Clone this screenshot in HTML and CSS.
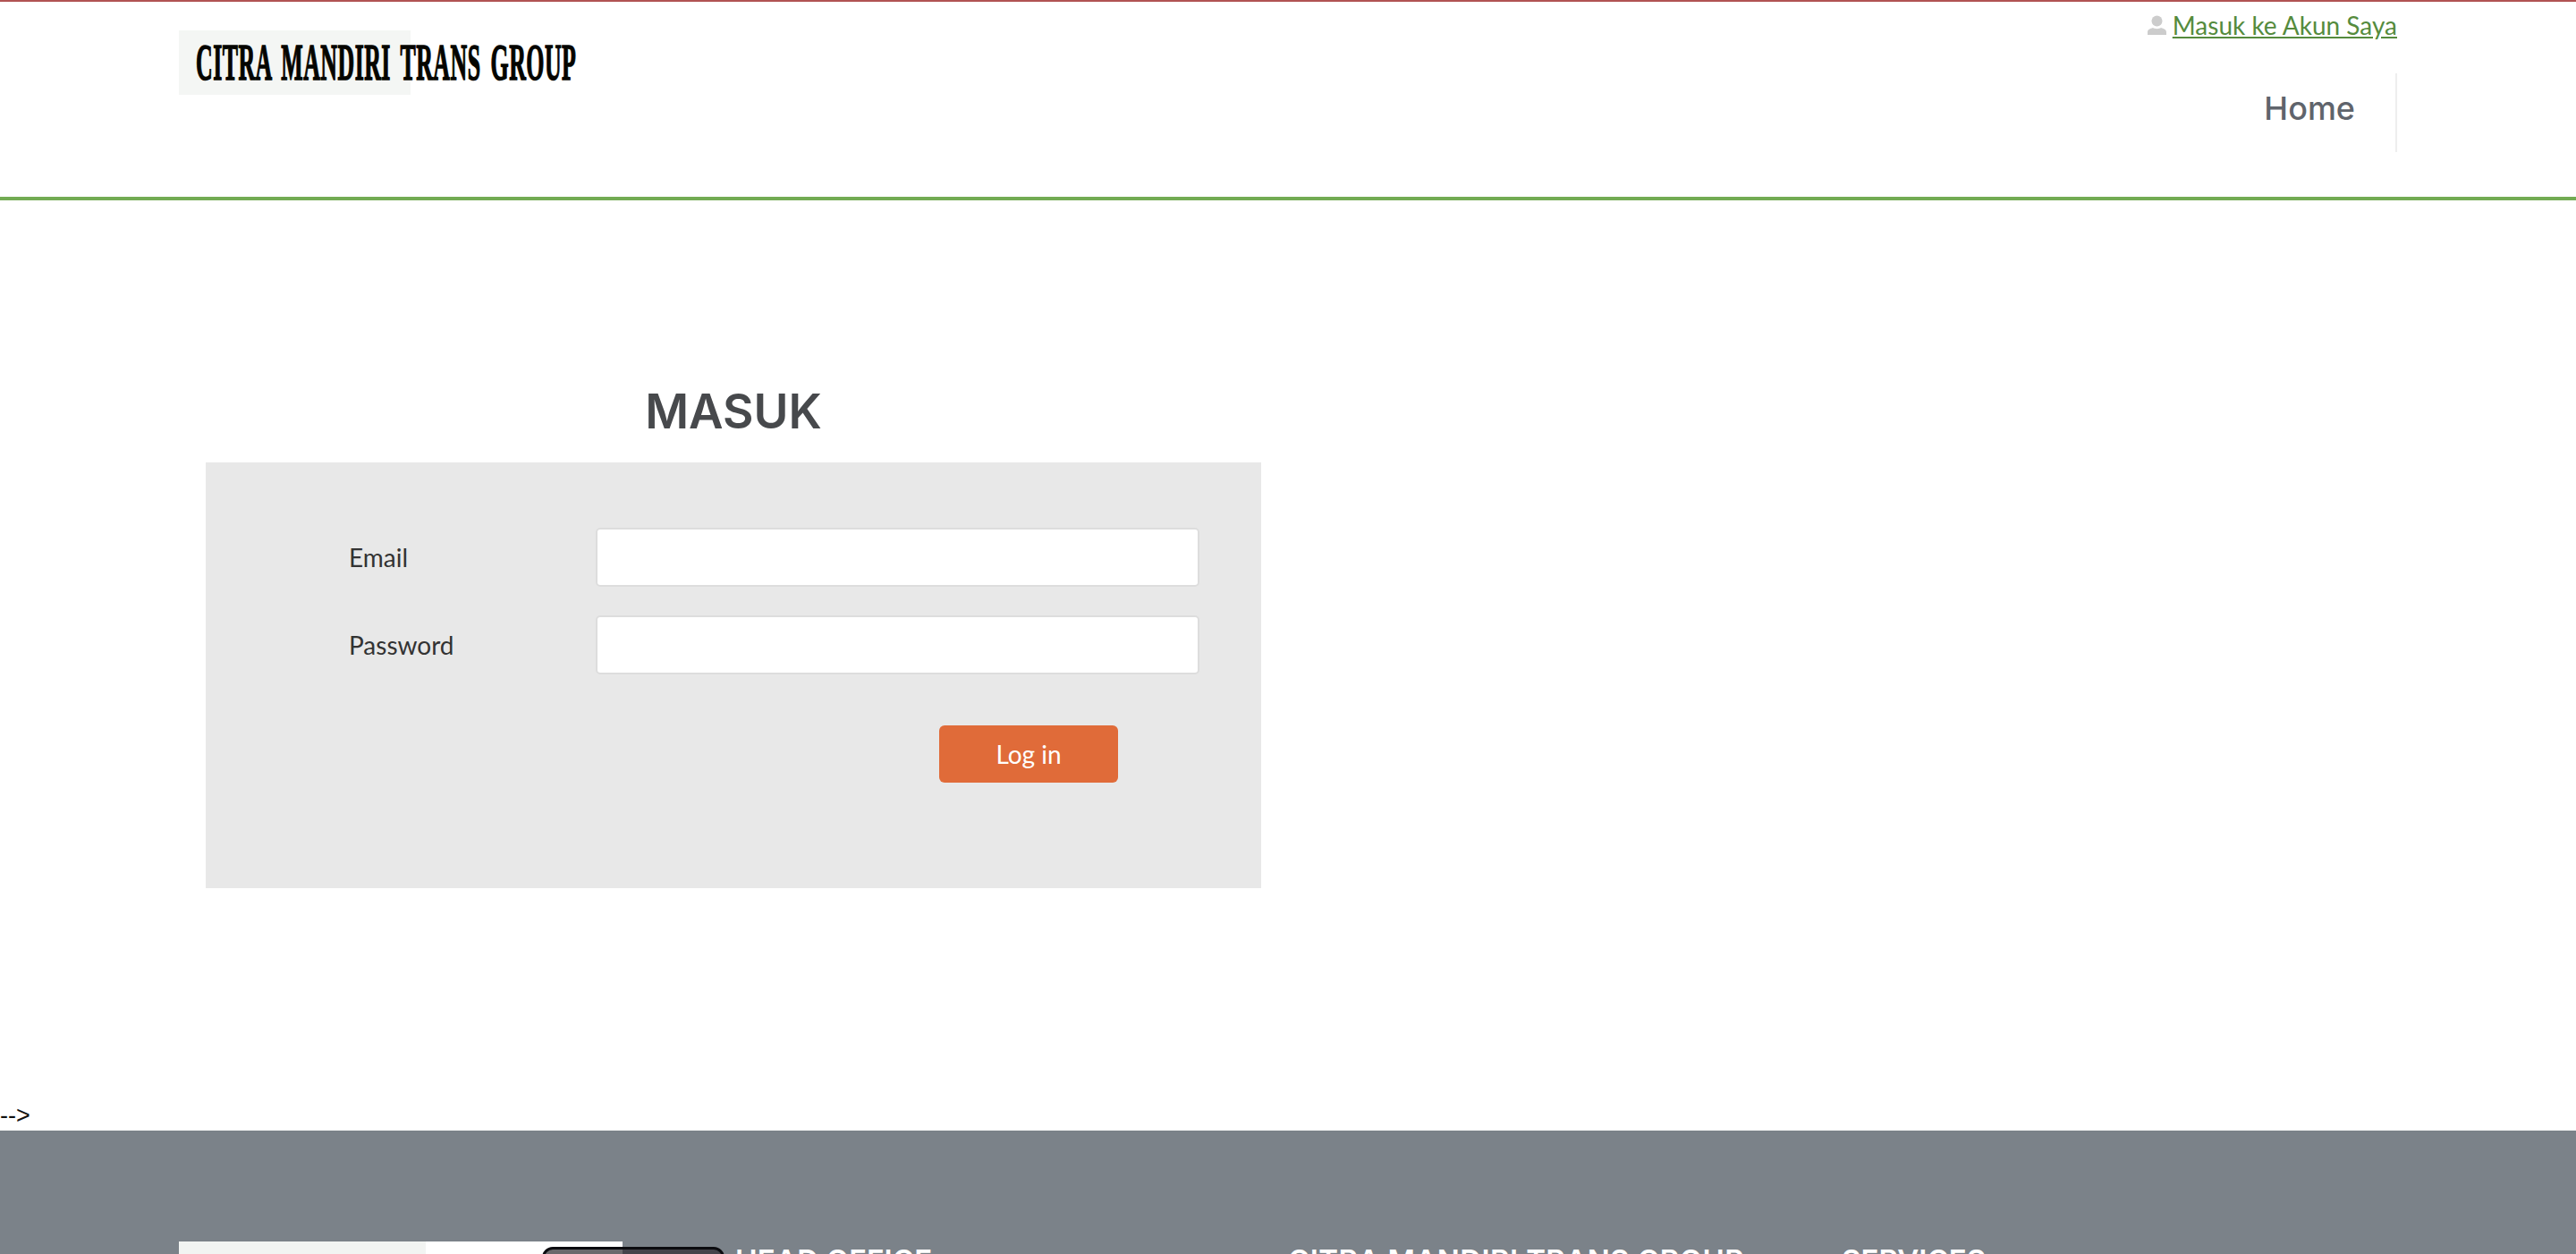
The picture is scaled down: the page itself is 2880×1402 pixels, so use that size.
FILE: index.html
```html
<!DOCTYPE html>
<html lang="id">
<head>
<meta charset="utf-8">
<title>Masuk</title>
<link rel="stylesheet" href="styles.css">
</head>
<body>
<header class="site-header">
  <div class="header-inner">
    <div class="logo"><span class="logo-text">CITRA MANDIRI TRANS GROUP</span></div>
    <div class="header-right">
      <div class="account">
        <svg class="user-icon" viewBox="0 0 21 22" width="21" height="22"><circle cx="10.500" cy="6.500" r="6"/><path d="M0 22v-3c0-3 3-4 6-5 1.500 1.500 7.500 1.500 9 0 3 1 6 2 6 5v3z"/></svg>
        <a class="account-link" href="#">Masuk ke Akun Saya</a>
      </div>
      <nav class="nav"><a class="nav-item" href="#">Home</a></nav>
    </div>
  </div>
</header>
<main class="main">
  <section class="login">
    <h1 class="login-title">MASUK</h1>
    <form class="login-box">
      <div class="field"><label class="field-label">Email</label><input class="field-input" type="text"></div>
      <div class="field"><label class="field-label">Password</label><input class="field-input" type="password"></div>
      <div class="actions"><button class="btn" type="button">Log in</button></div>
    </form>
  </section>
</main>
<div class="stray">--&gt;</div>
<footer class="footer">
  <div class="footer-inner">
    <div class="footer-logo"><span class="badge"></span></div>
    <h3 class="footer-h office">HEAD OFFICE</h3>
    <h3 class="footer-h group">CITRA MANDIRI TRANS GROUP</h3>
    <h3 class="footer-h services">SERVICES</h3>
  </div>
</footer>
</body>
</html>
```
FILE: styles.css
```css
* { box-sizing: border-box; }
html, body { margin: 0; padding: 0; height: 1402px; overflow: hidden; background: #fff; }
body { font-family: "Lato", "Open Sans", sans-serif; color: #333; }

.site-header { height: 224px; border-top: 2px solid #b15353; border-bottom: 4px solid #72ab53; }
.header-inner { display: flex; justify-content: space-between; width: 2480px; margin-left: 200px; }
.logo { margin-top: 32px; width: 259px; height: 72px; background: #f4f6f4; padding: 8px 0 0 19px; }
.logo-text { display: block; white-space: nowrap; font-family: "Liberation Serif", serif; font-weight: 700; font-size: 56px; line-height: 56px; color: #050500; transform: scaleX(.462); transform-origin: 0 0; -webkit-text-stroke: 1.500px #050500; letter-spacing: 1px; word-spacing: 9px; }

.header-right { display: flex; flex-direction: column; align-items: flex-end; }
.account { display: flex; align-items: center; gap: 7px; margin-top: 10px; height: 32px; }
.user-icon { fill: #ccc; }
.account-link { font-family: "Lato", sans-serif; font-size: 28px; color: #558b3d; }
.nav { margin-top: 38px; border-right: 2px solid #eee; height: 88px; display: flex; align-items: center; }
.nav-item { font-family: "Inter", sans-serif; font-weight: 500; font-size: 36px; color: #5f646c; text-decoration: none; padding: 0 45px 10px 0; }

.main { height: 1006px; padding-left: 230px; }
.login { width: 1180px; padding-top: 207px; }
.login-title { margin: 0; height: 58px; line-height: 58px; text-align: center; font-family: "Inter", sans-serif; font-weight: 600; font-size: 53px; color: #47494c; }
.login-box { margin-top: 28px; height: 476px; background: #e8e8e8; padding: 73px 69px 0 160px; }
.field { display: flex; align-items: center; margin-bottom: 32px; height: 66px; }
.field-label { width: 276px; font-family: "Lato", sans-serif; font-size: 28px; color: #333; }
.field-input { flex: 1; height: 66px; background: #fff; border: 2px solid #ddd; border-radius: 5px; }
.actions { display: flex; margin: 57px 0 0 660px; }
.btn { width: 200px; height: 64px; border: 0; border-radius: 6px; background: #e06b39; color: #fff; font-family: "Lato", sans-serif; font-size: 28px; }

.stray { height: 34px; font-family: "Liberation Sans", sans-serif; font-size: 27px; line-height: 34px; color: #111; }

.footer { height: 138px; background: #7b8289; overflow: hidden; }
.footer-inner { display: flex; margin-left: 200px; padding-top: 124px; }
.footer-logo { width: 496px; height: 60px; background: linear-gradient(90deg, #f2f4f2 276px, #fff 276px); flex: none; }
.badge { display: block; margin: 6px 0 0 406px; width: 204px; height: 60px; border: 3px solid #0c0c10; border-radius: 12px; background: linear-gradient(90deg, #6b696c 87px, #45434a 87px); }
.footer-h { margin: 0; font-family: "Inter", sans-serif; font-weight: 600; font-size: 33px; line-height: 32px; color: #fff; white-space: nowrap; padding-top: 5px; flex: none; }
.office { margin-left: 126px; width: 618px; letter-spacing: .2px; }
.group { width: 619px; letter-spacing: .4px; }
```
